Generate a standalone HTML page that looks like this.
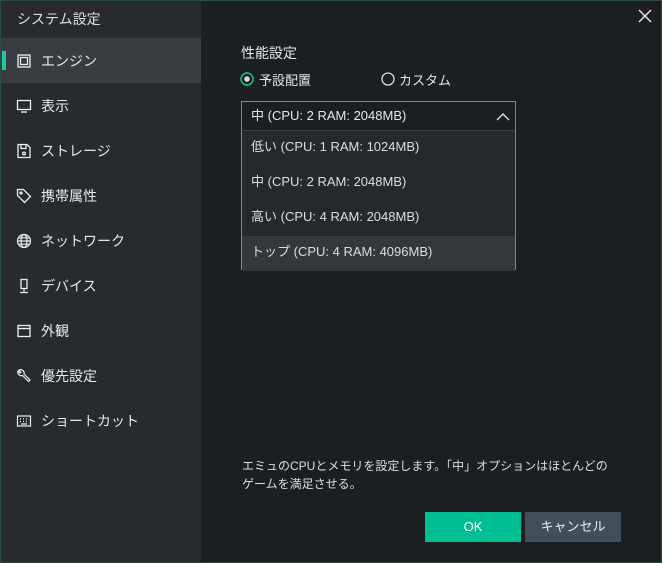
<!DOCTYPE html><html><head><meta charset="utf-8"><style>
*{margin:0;padding:0;box-sizing:border-box}
body{width:662px;height:563px;background:#1c1f22;font-family:"Liberation Sans","Noto Sans CJK JP",sans-serif;color:#e6e6e6;position:relative;overflow:hidden;font-size:14px}
.frame{position:absolute;inset:0;border:1px solid #2f4a45;pointer-events:none}
.side{position:absolute;left:1px;top:1px;width:200px;height:561px;background:#272b2f}
.title{position:absolute;left:16px;top:8px;font-size:14px;color:#ddd}
.item{position:absolute;left:0;width:200px;height:45px;display:flex;align-items:center}
.item.sel{background:#393d41}
.item.sel::before{content:"";position:absolute;left:1px;top:13px;width:4px;height:19px;background:#1ec9a0}
.item svg{position:absolute;left:15px}
.item span{position:absolute;left:40px;top:13px;font-size:14px;color:#e8e8e8}
.abs{position:absolute}
.dd{position:absolute;left:241px;top:101px;width:275px;height:169px;border:1px solid #1fb892;background:#26292c}
.dd .hd{height:29px;background:#1c1f22;border-bottom:1px solid #3a3e42;padding-left:9px;line-height:27px;font-size:13px}
.dd .row{height:35px;line-height:31px;padding-left:9px;font-size:13px;color:#ddd}
.btn{position:absolute;top:512px;height:30px;width:96px;text-align:center;line-height:29px;font-size:13px}
</style></head><body>
<div class="side">
<div class="title">システム設定</div>
<div class="item sel" style="top:37px"><svg width="16" height="16" viewBox="0 0 16 16" fill="none" stroke="#eee" stroke-width="1.3"><rect x="2" y="2" width="12" height="12"/><rect x="4.5" y="4.5" width="7" height="7"/></svg><span>エンジン</span></div>
<div class="item" style="top:82px"><svg width="16" height="16" viewBox="0 0 16 16" fill="none" stroke="#eee" stroke-width="1.3"><rect x="1.5" y="2.5" width="13" height="9"/><path d="M5 14h6"/></svg><span>表示</span></div>
<div class="item" style="top:127px"><svg width="16" height="16" viewBox="0 0 16 16" fill="none" stroke="#eee" stroke-width="1.3"><path d="M2 1.5h9l3 3v10H2z"/><path d="M5 1.5v4h5v-4"/><circle cx="8" cy="10.5" r="1.3"/></svg><span>ストレージ</span></div>
<div class="item" style="top:172px"><svg width="16" height="16" viewBox="0 0 16 16" fill="none" stroke="#eee" stroke-width="1.3"><path d="M1.5 1.5h6l7 7-6 6-7-7z"/><circle cx="5" cy="5" r="1"/></svg><span>携帯属性</span></div>
<div class="item" style="top:217px"><svg width="16" height="16" viewBox="0 0 16 16" fill="none" stroke="#eee" stroke-width="1.2"><circle cx="8" cy="8" r="6.5"/><ellipse cx="8" cy="8" rx="3" ry="6.5"/><path d="M1.5 8h13M2.5 4.8h11M2.5 11.2h11"/></svg><span>ネットワーク</span></div>
<div class="item" style="top:262px"><svg width="16" height="16" viewBox="0 0 16 16" fill="none" stroke="#eee" stroke-width="1.3"><rect x="5" y="1.5" width="6" height="9"/><path d="M8 10.5v3M4 14.5h8"/></svg><span>デバイス</span></div>
<div class="item" style="top:307px"><svg width="16" height="16" viewBox="0 0 16 16" fill="none" stroke="#eee" stroke-width="1.3"><rect x="2" y="2.5" width="12" height="11"/><path d="M2 5.5h12"/></svg><span>外観</span></div>
<div class="item" style="top:352px"><svg width="16" height="16" viewBox="0 0 16 16" fill="none" stroke="#eee" stroke-width="1.2"><path d="M3 2l2 2-1 1-2-2a3.5 3.5 0 0 0 4.5 4.5l6 6 1.5-1.5-6-6A3.5 3.5 0 0 0 3 2z"/></svg><span>優先設定</span></div>
<div class="item" style="top:397px"><svg width="16" height="16" viewBox="0 0 16 16" fill="none" stroke="#eee" stroke-width="1.2"><rect x="1.5" y="3" width="13" height="10"/><path d="M4 6h1M7 6h1M10 6h1M4 8.5h1M7 8.5h1M10 8.5h1M5 11h6"/></svg><span>ショートカット</span></div>
</div>
<svg class="abs" style="left:638px;top:9px" width="14" height="14" viewBox="0 0 14 14" stroke="#eee" stroke-width="1.4"><path d="M1 1l12 12M13 1L1 13"/></svg>
<div class="abs" style="left:241px;top:43px;font-size:14px">性能設定</div>
<svg class="abs" style="left:240px;top:72px" width="14" height="14" viewBox="0 0 14 14"><circle cx="7" cy="7" r="6" fill="none" stroke="#1ec9a0" stroke-width="1.4"/><circle cx="7" cy="7" r="2.8" fill="#ddd"/></svg>
<div class="abs" style="left:259px;top:70px;font-size:13px">予設配置</div>
<svg class="abs" style="left:381px;top:72px" width="14" height="14" viewBox="0 0 14 14"><circle cx="7" cy="7" r="6" fill="none" stroke="#ddd" stroke-width="1.3"/></svg>
<div class="abs" style="left:399px;top:70px;font-size:13px">カスタム</div>
<div class="dd">
<div class="hd">中 (CPU: 2 RAM: 2048MB)<svg class="abs" style="left:254px;top:10px" width="14" height="9" viewBox="0 0 14 9" fill="none" stroke="#ddd" stroke-width="1.4"><path d="M1 8l6-6 6 6"/></svg></div>
<div class="row">低い (CPU: 1 RAM: 1024MB)</div>
<div class="row">中 (CPU: 2 RAM: 2048MB)</div>
<div class="row">高い (CPU: 4 RAM: 2048MB)</div>
<div class="row" style="background:#34383b">トップ (CPU: 4 RAM: 4096MB)</div>
</div>
<div class="abs" style="left:242px;top:457px;font-size:12px;line-height:18px;color:#ddd;width:400px">エミュのCPUとメモリを設定します。「中」オプションはほとんどの<br>ゲームを満足させる。</div>
<div class="btn" style="left:425px;background:#00bf94;color:#fff">OK</div>
<div class="btn" style="left:525px;background:#434f58;color:#eee">キャンセル</div>
<div class="frame"></div>
</body></html>
